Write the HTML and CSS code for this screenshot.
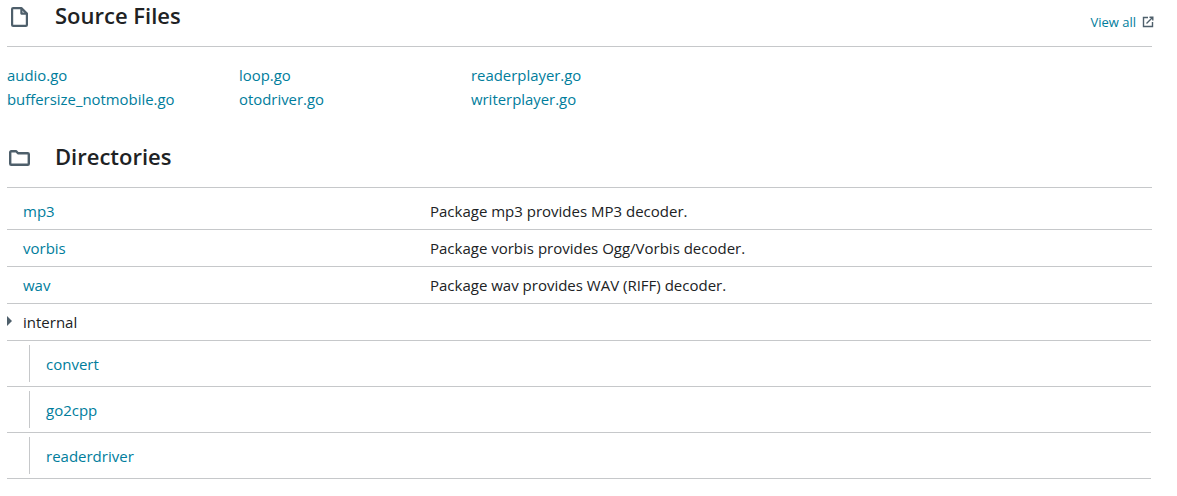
FILE: index.html
```html
<!DOCTYPE html>
<html lang="en">
<head>
    <meta charset="UTF-8">
    <meta name="viewport" content="width=device-width, initial-scale=1.0">
    <title>Source Files</title>
    <link rel="stylesheet" href="styles.css">
</head>
<body>
    <!-- Source Files -->
    <section class="files">
        <div class="section-header">
            <svg class="section-icon" width="24" height="24" viewBox="0 0 24 24" fill="none" stroke="#4e5f6b" stroke-width="2.2" stroke-linejoin="round">
                <path d="M6.100 5.100h8.300l5.500 5.500v11.300a1 1 0 0 1-1 1H6.100a1 1 0 0 1-1-1V6.100a1 1 0 0 1 1-1z"/>
                <path d="M14.400 5.100v5.500h5.500"/>
            </svg>
            <h2>Source Files</h2>
            <a class="view-all" href="#">View all
                <svg width="12" height="12" viewBox="0 0 12 12" fill="none" stroke="#4e5f6b" stroke-width="1.4">
                    <path d="M6 1.500H1.500v9h9V6"/>
                    <path d="M4.500 7.500L10.500 1.500M7.500 1.200h3.300v3.300"/>
                </svg>
            </a>
        </div>
        <ul class="file-list">
            <li><a href="#">audio.go</a></li>
            <li><a href="#">loop.go</a></li>
            <li><a href="#">readerplayer.go</a></li>
            <li><a href="#">buffersize_notmobile.go</a></li>
            <li><a href="#">otodriver.go</a></li>
            <li><a href="#">writerplayer.go</a></li>
        </ul>
    </section>

    <!-- Directories -->
    <section class="directories">
        <div class="section-header">
            <svg class="section-icon" width="24" height="24" viewBox="0 0 24 24" fill="none" stroke="#4e5f6b" stroke-width="2.4" stroke-linejoin="round">
                <path d="M3.200 8.200a1 1 0 0 1 1-1h5l1.800 2h9.800a1 1 0 0 1 1 1v9.600a1 1 0 0 1-1 1H4.200a1 1 0 0 1-1-1z"/>
            </svg>
            <h2>Directories</h2>
        </div>
        <div class="dir-row dir-first"><a href="#">mp3</a><span>Package mp3 provides MP3 decoder.</span></div>
        <div class="dir-row"><a href="#">vorbis</a><span>Package vorbis provides Ogg/Vorbis decoder.</span></div>
        <div class="dir-row"><a href="#">wav</a><span>Package wav provides WAV (RIFF) decoder.</span></div>
        <div class="dir-row dir-parent"><i class="caret"></i>internal</div>
        <div class="dir-child"><div class="dir-child-inner"><a href="#">convert</a></div></div>
        <div class="dir-child"><div class="dir-child-inner"><a href="#">go2cpp</a></div></div>
        <div class="dir-child"><div class="dir-child-inner"><a href="#">readerdriver</a></div></div>
    </section>
</body>
</html>
```

FILE: styles.css
```css
body {
    font-family: "Open Sans", "Noto Sans", Arial, sans-serif;
    font-size: 15px;
    color: #202224;
    background-color: #fff;
    margin: 0;
    padding: 0 25px 0 7px;
}
a {
    color: #007d9c;
    text-decoration: none;
}

/* Section headers */
.section-header {
    display: flex;
    align-items: center;
    border-bottom: 1px solid #c6c8ca;
}
.section-icon {
    margin-right: 24px;
    flex: none;
}
h2 {
    margin: 0;
    font-size: 22px;
    font-weight: 600;
    line-height: 24px;
}
.files .section-header {
    padding-bottom: 16px;
    height: 30px;
}
.view-all {
    margin-left: auto;
    margin-right: -2px;
    font-size: 13px;
    display: flex;
    align-items: center;
    gap: 6px;
    padding-top: 14px;
}

/* Source files */
.file-list {
    list-style: none;
    margin: 0;
    padding: 16px 0 0;
    display: grid;
    grid-template-columns: repeat(3, 232px);
    font-size: 14.9px;
    line-height: 24px;
}

/* Directories */
.directories .section-header {
    margin-top: 26px;
    height: 38px;
    padding-bottom: 12px;
}
.dir-row {
    display: grid;
    grid-template-columns: 407px 1fr;
    padding-left: 16px;
    height: 36px;
    line-height: 36px;
    border-bottom: 1px solid #c6c8ca;
}
.dir-first {
    height: 41px;
    line-height: 47px;
}
.dir-parent {
    display: block;
    position: relative;
    margin-right: 1px;
}
.caret {
    position: absolute;
    left: 0;
    top: 12px;
    border-left: 5px solid #4e5f6b;
    border-top: 5px solid transparent;
    border-bottom: 5px solid transparent;
}
.dir-child {
    height: 46px;
    margin-right: 1px;
    padding: 4px 0 0 22px;
    box-sizing: border-box;
    border-bottom: 1px solid #c6c8ca;
}
.dir-child-inner {
    border-left: 1px solid #c6c8ca;
    padding-left: 16px;
    height: 37px;
    line-height: 38px;
}
```
